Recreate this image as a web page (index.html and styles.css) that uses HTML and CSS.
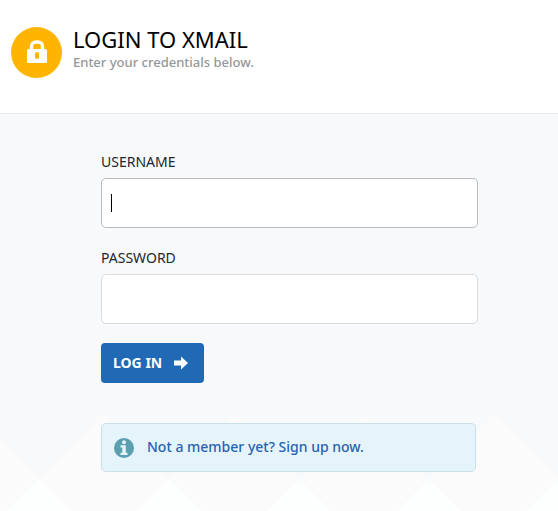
FILE: index.html
```html
<!DOCTYPE html>
<html lang="en">
<head>
<meta charset="utf-8">
<meta name="viewport" content="width=device-width, initial-scale=1">
<title>Login to XMail</title>
<link rel="stylesheet" href="styles.css">
</head>
<body>
<header class="header">
  <svg class="header-icon" viewBox="0 0 51 51" aria-hidden="true">
    <circle cx="25.500" cy="25.500" r="25.500" fill="#ffb400"/>
    <path d="M20.500 23v-3.500a4.500 4.500 0 0 1 4.500-4.500h2a4.500 4.500 0 0 1 4.500 4.500V23" fill="none" stroke="#fff" stroke-width="3.400"/>
    <rect x="16" y="22" width="20" height="14" rx="1.500" fill="#fff"/>
    <rect x="24" y="25" width="4" height="7" rx="2" fill="#ffb400"/>
  </svg>
  <div>
    <h1 class="title">LOGIN TO XMAIL</h1>
    <p class="subtitle">Enter your credentials below.</p>
  </div>
</header>
<main class="main">
  <svg class="pattern" aria-hidden="true">
    <defs>
      <pattern id="peaks" x="-91" width="130" height="96" patternUnits="userSpaceOnUse">
        <path d="M0 65L65 0l65 65v31H0z" fill="#fbfbfc"/>
        <path d="M0 64l32 32H0zM130 64L98 96h32z" fill="#fdfefe"/>
      </pattern>
    </defs>
    <rect width="100%" height="96" fill="url(#peaks)"/>
  </svg>
  <form class="form">
    <label class="label" for="username">USERNAME</label>
    <input class="field field-active" id="username" type="text" autocomplete="username">
    <label class="label" for="password">PASSWORD</label>
    <input class="field" id="password" type="password" autocomplete="current-password">
    <button class="button" type="submit">LOG IN
      <svg class="arrow" viewBox="0 0 14 14" aria-hidden="true"><path d="M0 4.500h7V.5L14 7l-7 6.500v-4H0z" fill="#fff"/></svg>
    </button>
  </form>
  <div class="notice">
    <svg class="info" viewBox="0 0 20 20" aria-hidden="true">
      <circle cx="10" cy="10" r="10" fill="#5b9fb0"/>
      <circle cx="10" cy="4.200" r="2" fill="#e5f4fa"/>
      <path d="M6.500 7.300h5.300v7.500h1.700V17h-7v-2.200h1.800V9.500H6.500z" fill="#e5f4fa"/>
    </svg>
    <a class="signup" href="#">Not a member yet? Sign up now.</a>
  </div>
</main>
</body>
</html>
```
FILE: styles.css
```css
* {
  box-sizing: border-box;
}

body {
  margin: 0;
  min-height: 100vh;
  display: flex;
  flex-direction: column;
  background: #fff;
  color: #22262e;
  font-family: "Noto Sans", "Open Sans", sans-serif;
  font-size: 14px;
  line-height: 20px;
}

.header {
  display: flex;
  align-items: flex-start;
  gap: 11px;
  padding: 27px 11px 35px;
  border-bottom: 1px solid #e8ecee;
}

.header-icon {
  width: 51px;
  height: 51px;
  flex: none;
}

.title {
  margin: 0;
  color: #000;
  font-size: 22px;
  font-weight: 400;
  line-height: 24px;
}

.subtitle {
  margin: 0;
  color: #94979b;
  font-size: 13px;
  font-weight: 500;
  line-height: 22px;
}

.main {
  position: relative;
  flex: 1;
  padding: 38px 80px 39px 101px;
  background: #f8f9fb;
}

.pattern {
  position: absolute;
  left: 0;
  bottom: 0;
  width: 100%;
  height: 96px;
}

.form {
  position: relative;
  display: flex;
  flex-direction: column;
}

.label {
  margin-bottom: 6px;
}

.field {
  width: 100%;
  height: 50px;
  margin: 0 0 20px;
  padding: 0 10px;
  border: 1px solid #d9dbde;
  border-radius: 5px;
  background: #fff;
  font: inherit;
  outline: none;
}

.field-active {
  border-color: #b9bbbe;
  background: linear-gradient(#000, #000) 9px center / 1px 18px no-repeat #fff;
}

.field-active:focus {
  background: #fff;
}

.button {
  display: flex;
  align-items: center;
  align-self: flex-start;
  gap: 12px;
  height: 40px;
  margin: -1px 0 0;
  padding: 0 16px 0 12px;
  border: 0;
  border-radius: 4px;
  background: #206ab5;
  color: #fff;
  font: inherit;
  font-weight: 700;
}

.arrow {
  width: 14px;
  height: 14px;
}

.notice {
  position: relative;
  display: flex;
  align-items: center;
  gap: 13px;
  height: 49px;
  margin: 40px 2px 0 0;
  padding: 0 12px;
  border: 1px solid #c9e0e8;
  border-radius: 5px;
  background: #e5f4fa;
}

.info {
  width: 20px;
  height: 20px;
  flex: none;
}

.signup {
  padding-bottom: 2px;
  color: #2763b3;
  font-weight: 500;
  text-decoration: none;
}
```
